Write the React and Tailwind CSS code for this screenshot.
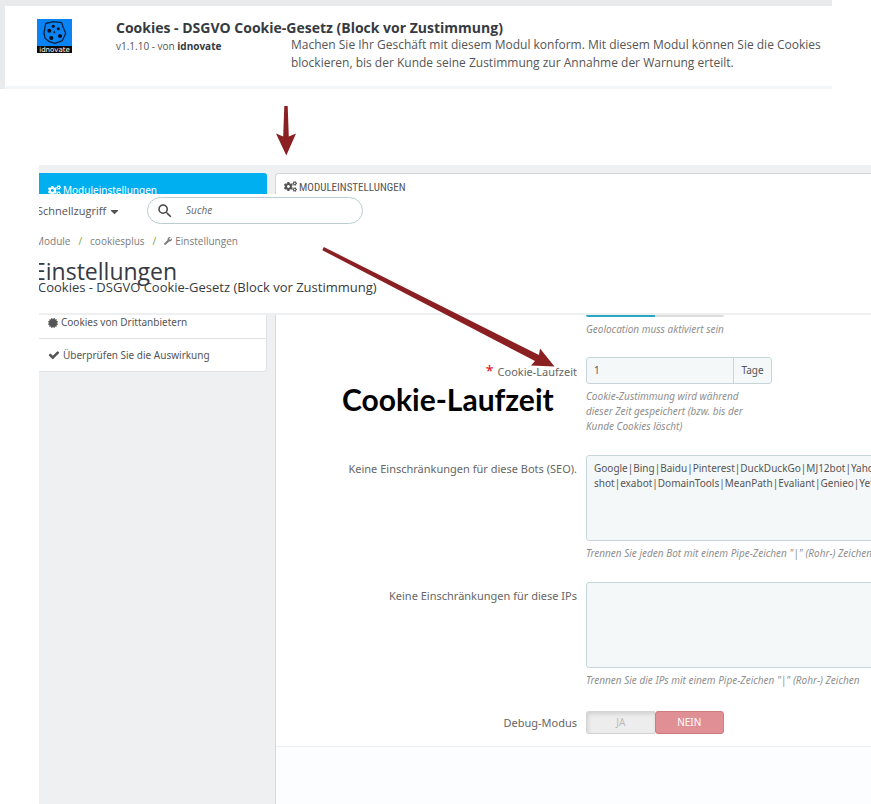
import React, { useState } from "react";
import { FaCogs, FaCertificate, FaWrench, FaCaretDown } from "react-icons/fa";
import { MdSearch } from "react-icons/md";

const BOTS =
  "Google|Bing|Baidu|Pinterest|DuckDuckGo|MJ12bot|Yahoo\nshot|exabot|DomainTools|MeanPath|Evaliant|Genieo|Yeti";

function Logo() {
  return (
    <svg viewBox="0 0 35 34" className="w-[35px] h-[34px] shrink-0" role="img" aria-label="idnovate">
      <rect width="35" height="34" fill="#0a84f5" />
      <rect y="27" width="35" height="7" fill="#0b0b0b" />
      <path
        d="M8.700 4.500L16.300 2.700 24.700 3.700 26.300 8.700 28.700 14.300 25.300 21.700 18 24.300 12.300 22.700 8 19.300 7 13.700z"
        fill="none"
        stroke="#06213d"
        strokeWidth="1.300"
        strokeLinejoin="round"
      />
      <g fill="#04101f">
        <circle cx="16.300" cy="7.300" r="1.600" />
        <circle cx="21.300" cy="9.700" r="1.500" />
        <circle cx="12.300" cy="11.700" r="2" />
        <circle cx="17.300" cy="13.300" r="1" />
        <circle cx="23" cy="17" r="2" />
        <circle cx="14.300" cy="19" r="2.100" />
      </g>
      <text
        x="17.500"
        y="33"
        textAnchor="middle"
        fontFamily="DejaVu Sans"
        fontSize="7"
        fill="#ffffff"
      >
        idnovate
      </text>
    </svg>
  );
}

function CheckIcon() {
  return (
    <svg viewBox="0 0 1792 1792" className="h-3 w-3" fill="currentColor" aria-hidden="true">
      <path d="M1671 566q0 40-28 68l-724 724-136 136q-28 28-68 28t-68-28l-136-136-362-362q-28-28-28-68t28-68l136-136q28-28 68-28t68 28l294 295 656-657q28-28 68-28t68 28l136 136q28 28 28 68z" />
    </svg>
  );
}

function ModuleCard() {
  return (
    <div className="mr-[39px] border-t-[6px] border-l-[5px] border-[#e9eaec] font-['Open_Sans',sans-serif]">
      <div className="flex h-[83px] border-b-[3px] border-[#f2f6f9] bg-white pl-8 pt-[13px]">
        <Logo />
        <div className="ml-11 min-w-0 flex-1 whitespace-nowrap">
          <h2 className="text-[14px] leading-[17px] font-bold text-[#363a41]">
            Cookies - DSGVO Cookie-Gesetz (Block vor Zustimmung)
          </h2>
          <div className="flex">
            <p className="w-[175px] shrink-0 text-[10px] leading-5">
              v1.1.10 - von <b className="text-[#363a41]">idnovate</b>
            </p>
            <p className="text-[12px] leading-[18px]">
              Machen Sie Ihr Geschäft mit diesem Modul konform. Mit diesem Modul können Sie die Cookies
              <br />
              blockieren, bis der Kunde seine Zustimmung zur Annahme der Warnung erteilt.
            </p>
          </div>
        </div>
      </div>
    </div>
  );
}

function PageHeader() {
  return (
    <header className="h-[121px] overflow-hidden border-b-2 border-[#eeeff1] bg-white font-['Open_Sans',sans-serif] whitespace-nowrap">
      <div className="-ml-0.5 flex items-center pt-[3px]">
        <button className="flex items-center gap-0.5 pt-0.5 text-[11px] text-[#555]">
          Schnellzugriff <FaCaretDown size={13} />
        </button>
        <label className="ml-[26px] flex h-[27px] w-[216px] items-center rounded-full border border-[#bbcdd2] pl-2">
          <MdSearch size={18} color="#444" />
          <input
            type="text"
            placeholder="Suche"
            aria-label="Suche"
            className="ml-3 w-36 text-[10px] italic outline-none placeholder:text-[#666]"
          />
        </label>
      </div>
      <nav className="-ml-1 mt-2 flex items-center text-[10px] leading-[18px] text-[#7b7b7b]">
        <a href="#module">Module</a>
        <span className="mx-2 text-[#7da23c]">/</span>
        <a href="#cookiesplus">cookiesplus</a>
        <span className="mx-2 text-[#7da23c]">/</span>
        <a href="#einstellungen" className="flex items-center gap-[3px]">
          <FaWrench size={8} /> Einstellungen
        </a>
      </nav>
      <h1 className="-ml-1.5 mt-[7px] text-[23px] leading-7 text-[#363a41]">Einstellungen</h1>
      <p className="-mt-[6px] -ml-px text-[13px] leading-4 text-[#363a41]">
        Cookies - DSGVO Cookie-Gesetz (Block vor Zustimmung)
      </p>
    </header>
  );
}

function Field({ id, label, required, children }) {
  return (
    <div className="flex items-start gap-[9px]">
      <label htmlFor={id} className="w-[301px] shrink-0 pt-1.5 text-right text-[11px] leading-4 text-[#666]">
        {required && <span className="mr-1 text-[14px] text-red-600">*</span>}
        {label}
      </label>
      <div className="min-w-0 flex-1 overflow-hidden">{children}</div>
    </div>
  );
}

function Hint({ children }) {
  return (
    <p className="mt-[5px] whitespace-nowrap text-[10px] leading-[15px] text-[#8f8f8f] italic">{children}</p>
  );
}

export default function App() {
  const [days, setDays] = useState("1");
  const [bots, setBots] = useState(BOTS);
  const [ips, setIps] = useState("");
  const [debug, setDebug] = useState(false);

  const area =
    "block h-[86px] w-[440px] resize-none overflow-hidden whitespace-pre rounded-[3px] border border-[#c7d6db] bg-[#f5f8f9] px-[7px] py-[5px] text-[10px] leading-[15px] text-[#555] outline-none";

  return (
    <div className="relative min-h-screen overflow-hidden bg-white font-['Noto_Sans','Open_Sans',sans-serif] text-[#555]">
      <ModuleCard />

      <div className="flex h-[76px] pl-[276px] pt-[17px]">
        <svg viewBox="0 0 20 50" className="h-[50px] w-5" aria-hidden="true">
          <path d="M8.300 0h3.400l1.100 30.500 7.200-3L10.300 49.500 0 27.500l7.200 3z" fill="#8b2023" />
        </svg>
      </div>

      <section className="ml-[39px] bg-[#eff0f2]">
        <div className="flex h-[29px] gap-2 overflow-hidden pt-2">
          <a
            href="#moduleinstellungen"
            className="flex h-[34px] w-[228px] shrink-0 items-center gap-0.5 rounded-tr-[3px] bg-[#00aff0] pl-[9px] text-[10px] text-white"
          >
            <FaCogs size={13} /> Moduleinstellungen
          </a>
          <h3 className="flex h-[34px] flex-1 items-start gap-0.5 rounded-tl-[4px] border-t border-l border-[#d0d7da] bg-white pl-2 pt-1.5 font-['Roboto_Condensed','Roboto',sans-serif] text-[11px] leading-4">
            <FaCogs size={13} /> MODULEINSTELLUNGEN
          </h3>
        </div>

        <PageHeader />

        <div className="flex gap-2">
          <nav className="w-[228px] shrink-0 text-[10px]">
            <a
              href="#drittanbieter"
              className="flex h-6 items-center gap-[3px] border-r border-b border-[#dfe3e6] bg-white pb-2 pl-[9px]"
            >
              <FaCertificate size={10} /> Cookies von Drittanbietern
            </a>
            <a
              href="#auswirkung"
              className="flex h-[33px] items-center gap-[3px] rounded-br-[3px] border-r border-b border-[#dfe3e6] bg-white pl-[9px]"
            >
              <CheckIcon /> Überprüfen Sie die Auswirkung
            </a>
          </nav>

          <form className="min-w-0 flex-1 border-l border-[#d3dadd] bg-white">
            <div className="flex flex-col gap-[21px] pb-2.5">
              <div className="-mb-px pl-[310px]">
                <div className="flex h-0.5 w-[138px] overflow-hidden rounded-b-[3px]">
                  <span className="flex-1 bg-[#2ba6c6]" />
                  <span className="flex-1 bg-[#dcdcdc]" />
                </div>
                <Hint>Geolocation muss aktiviert sein</Hint>
              </div>

              <Field id="laufzeit" label="Cookie-Laufzeit" required>
                <div className="flex h-[27px] w-[186px] overflow-hidden rounded-[3px] border border-[#c7d6db] bg-[#f5f8f9] text-[10px]">
                  <input
                    id="laufzeit"
                    type="text"
                    value={days}
                    onChange={(e) => setDays(e.target.value)}
                    className="min-w-0 flex-1 px-[7px] outline-none"
                  />
                  <span className="flex w-[38px] items-center justify-center border-l border-[#c7d6db]">Tage</span>
                </div>
                <Hint>
                  Cookie-Zustimmung wird während
                  <br />
                  dieser Zeit gespeichert (bzw. bis der
                  <br />
                  Kunde Cookies löscht)
                </Hint>
              </Field>

              <Field id="bots" label="Keine Einschränkungen für diese Bots (SEO).">
                <textarea id="bots" value={bots} onChange={(e) => setBots(e.target.value)} className={area} />
                <Hint>Trennen Sie jeden Bot mit einem Pipe-Zeichen "|" (Rohr-) Zeichen</Hint>
              </Field>

              <Field id="ips" label="Keine Einschränkungen für diese IPs">
                <textarea id="ips" value={ips} onChange={(e) => setIps(e.target.value)} className={area} />
                <Hint>Trennen Sie die IPs mit einem Pipe-Zeichen "|" (Rohr-) Zeichen</Hint>
              </Field>

              <Field id="debug" label="Debug-Modus">
                <div className="my-0.5 flex h-[23px] w-[138px] text-[10px]">
                  <button
                    type="button"
                    onClick={() => setDebug(true)}
                    aria-pressed={debug}
                    className="flex-1 rounded-l-[3px] border border-r-0 border-[#d4d4d4] bg-[#ededed] text-[#bbb] shadow-[inset_1px_2px_4px_rgba(0,0,0,0.12)]"
                  >
                    JA
                  </button>
                  <button
                    id="debug"
                    type="button"
                    onClick={() => setDebug(false)}
                    aria-pressed={!debug}
                    className="flex-1 rounded-[3px] border border-[#cf7b82] bg-[#e08f95] text-white"
                  >
                    NEIN
                  </button>
                </div>
              </Field>
            </div>
            <div className="h-[58px] border-t border-[#eceff1] bg-[#fcfdfe]" />
          </form>
        </div>
      </section>

      {/* annotations drawn over the form */}
      <svg viewBox="0 0 234 122" className="absolute top-[246px] left-[322px] h-[122px] w-[234px]" aria-hidden="true">
        <path d="M1.800 1L.3 4.200 213 115 209 119.500 232.500 120.500 218 102.500 217 109z" fill="#8b2023" />
      </svg>
      <strong className="absolute top-[381px] left-[342px] font-['Lato',sans-serif] text-[30px] leading-9 font-bold text-black">
        Cookie-Laufzeit
      </strong>
    </div>
  );
}
